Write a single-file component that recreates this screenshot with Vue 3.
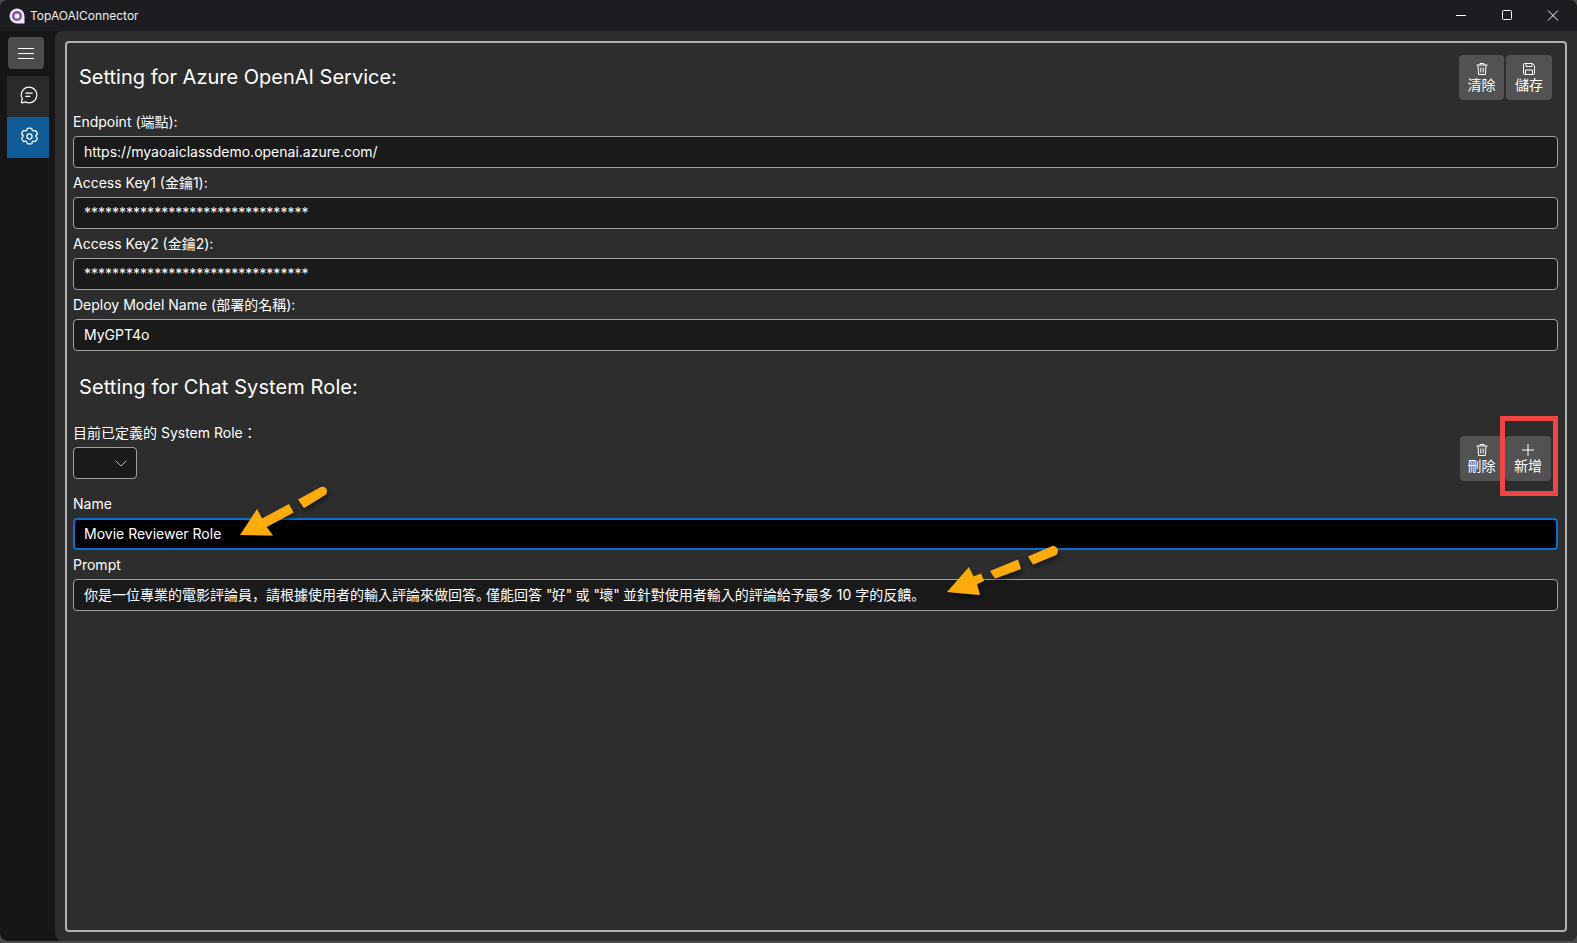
<script setup>
const serviceFields = [
  { label: 'Endpoint (端點):', value: 'https://myaoaiclassdemo.openai.azure.com/' },
  { label: 'Access Key1 (金鑰1):', value: '********************************' },
  { label: 'Access Key2 (金鑰2):', value: '********************************' },
  { label: 'Deploy Model Name (部署的名稱):', value: 'MyGPT4o' },
]
</script>

<template>
  <div class="window">
    <header class="titlebar">
      <svg class="logo" width="16" height="16" viewBox="0 0 16 16">
        <path d="M8 .5a7.500 7.500 0 1 0 0 15h7.500V8A7.500 7.500 0 0 0 8 .5z" fill="#efe6f5" />
        <circle cx="8" cy="8" r="5" fill="#7a4fa8" />
        <circle cx="8" cy="8" r="2.600" fill="#f4eef8" />
      </svg>
      <span class="app-name">TopAOAIConnector</span>
      <div class="win-controls">
        <svg width="46" height="31" viewBox="0 0 46 31"><path d="M18 15.500h10" stroke="#fff" fill="none" /></svg>
        <svg width="46" height="31" viewBox="0 0 46 31"><rect x="18.500" y="10.500" width="9" height="9" rx="1" stroke="#fff" fill="none" /></svg>
        <svg width="46" height="31" viewBox="0 0 46 31"><path d="M18 10.500l10 10m0-10l-10 10" stroke="#fff" fill="none" /></svg>
      </div>
    </header>

    <div class="body">
      <nav class="sidebar">
        <div class="hamburger">
          <svg width="16" height="11" viewBox="0 0 16 11"><path d="M0 .5h16M0 5.500h16M0 10.500h16" stroke="#fff" fill="none" /></svg>
        </div>
        <div class="nav-item">
          <svg width="18" height="18" viewBox="0 0 18 18" fill="none" stroke="#fff" stroke-width="1.200">
            <path d="M9 1.200a7.800 7.800 0 1 1-3.600 14.700l-3.200.9a.6.6 0 0 1-.8-.8l.9-3.200A7.800 7.800 0 0 1 9 1.200z" />
            <path d="M5.800 7.200h6.400M5.800 10.400h4" stroke-linecap="round" />
          </svg>
        </div>
        <div class="nav-item active">
          <svg width="19" height="19" viewBox="0 0 24 24" fill="none" stroke="#fff" stroke-width="1.600" stroke-linejoin="round">
            <circle cx="12" cy="12" r="3.200" />
            <path d="M12 2c1 0 1.900.1 2.800.4l.6 2.300c.2.800 1 1.300 1.800 1.100l2.300-.6c1.200 1.300 2.100 2.900 2.500 4.700l-1.700 1.600c-.6.600-.6 1.500 0 2.100l1.700 1.600c-.4 1.800-1.300 3.400-2.500 4.700l-2.300-.6c-.8-.2-1.600.3-1.800 1.100l-.6 2.300" transform="translate(0 -.6) scale(1 .96)" />
            <path d="M12 2c-1 0-1.900.1-2.800.4l-.6 2.300c-.2.800-1 1.300-1.800 1.100l-2.300-.6c-1.200 1.300-2.100 2.900-2.500 4.700l1.700 1.600c.6.600.6 1.500 0 2.100l-1.700 1.600c.4 1.800 1.300 3.400 2.500 4.700l2.300-.6c.8-.2 1.600.3 1.800 1.100l.6 2.300c.9.300 5.700.3 5.600 0" transform="translate(0 -.6) scale(1 .96)" />
          </svg>
        </div>
      </nav>

      <main class="content">
        <section class="panel">
          <div class="section-head">
            <h2 class="section-title first">Setting for Azure OpenAI Service:</h2>
            <div class="actions">
              <button class="action">
                <svg width="14" height="14" viewBox="0 0 14 14" fill="none" stroke="#fff"><path d="M1.500 3h11M5 3V1.500h4V3M3 3l.6 9.500h6.800L11 3M5.800 5.500v5M8.200 5.500v5" /></svg>
                <span>清除</span>
              </button>
              <button class="action">
                <svg width="14" height="14" viewBox="0 0 14 14" fill="none" stroke="#fff"><path d="M1.500 2.500a1 1 0 0 1 1-1h8l2 2v8a1 1 0 0 1-1 1h-9a1 1 0 0 1-1-1z" /><path d="M4 1.500v3h6v-3M3.500 12.500V8h7v4.500" /></svg>
                <span>儲存</span>
              </button>
            </div>
          </div>

          <div v-for="f in serviceFields" :key="f.label" class="field">
            <label class="field-label">{{ f.label }}</label>
            <div class="input">{{ f.value }}</div>
          </div>

          <h2 class="section-title second">Setting for Chat System Role:</h2>

          <div class="role-row">
            <div class="role-select">
              <label class="select-label">目前已定義的 System Role：</label>
              <div class="select">
                <svg width="12" height="7" viewBox="0 0 12 7" fill="none" stroke="#bbb"><path d="M.5.5L6 6l5.500-5.500" /></svg>
              </div>
            </div>
            <div class="actions role-actions">
              <button class="action">
                <svg width="14" height="14" viewBox="0 0 14 14" fill="none" stroke="#fff"><path d="M1.500 3h11M5 3V1.500h4V3M3 3l.6 9.500h6.800L11 3M5.800 5.500v5M8.200 5.500v5" /></svg>
                <span>刪除</span>
              </button>
              <button class="action">
                <svg width="14" height="14" viewBox="0 0 14 14" fill="none" stroke="#fff"><path d="M7 1v12M1 7h12" /></svg>
                <span>新增</span>
              </button>
            </div>
          </div>

          <div class="field name-field">
            <label class="field-label">Name</label>
            <div class="input focused">Movie Reviewer Role</div>
          </div>
          <div class="field">
            <label class="field-label">Prompt</label>
            <div class="input prompt-input">你是一位專業的電影評論員<span class="mark">，</span>請根據使用者的輸入評論來做回答<span class="mark narrow">。</span>僅能回答 <span class="quoted">"</span>好<span class="quoted">"</span> 或 <span class="quoted">"</span>壞<span class="quoted">"</span> 並針對使用者輸入的評論給予最多 10 字的反饋<span class="mark narrow">。</span></div>
          </div>
        </section>
      </main>
    </div>

    <svg class="annotations" width="1577" height="943" viewBox="0 0 1577 943">
      <defs>
        <filter id="soft" x="-20%" y="-20%" width="140%" height="150%">
          <feDropShadow dx="1" dy="3" stdDeviation="2.500" flood-color="#000" flood-opacity=".55" />
        </filter>
      </defs>
      <rect x="1502.500" y="418.500" width="53" height="75" fill="none" stroke="#f04545" stroke-width="5" />
      <g filter="url(#soft)" fill="#fcab0a" stroke="none">
        <path d="M240 535L257 509L262 518.500L289 504L293.500 512.500L266.500 527L273 535.500z" />
        <path d="M298 499.500L320 487.500A4.500 4.500 0 0 1 325 495L304 508z" />
        <path d="M947 592L969 567L973.500 576.500L981 573.500L984 581L977 584L980 595z" />
        <path d="M990 571L1018 559.500L1021 569L995 578.500z" />
        <path d="M1028 556.500L1050 547A4.500 4.500 0 0 1 1056 555L1033 564.500z" />
      </g>
    </svg>
  </div>
</template>

<style>
html, body { margin: 0; background: #4a4a4a; }
</style>

<style scoped>
.window {
  position: relative;
  width: 1577px;
  height: 941px;
  overflow: hidden;
  display: flex;
  flex-direction: column;
  background: #161616;
  border-radius: 8px;
  font-family: Inter, "Noto Sans CJK TC", sans-serif;
  color: #fff;
  font-size: 14px;
}
.titlebar {
  height: 31px;
  flex: none;
  display: flex;
  align-items: center;
  background: #1c1d21;
  padding-left: 9px;
  box-sizing: border-box;
}
.logo { flex: none; }
.app-name { margin-left: 5px; font-size: 12px; color: #eee; }
.win-controls { margin-left: auto; margin-right: 1px; display: flex; }
.body { flex: 1; display: flex; min-height: 0; }
.sidebar {
  width: 55px;
  flex: none;
  padding: 6px 0 0 7px;
  box-sizing: border-box;
  display: flex;
  flex-direction: column;
}
.hamburger {
  width: 36px;
  height: 32px;
  margin: 0 0 7px 1px;
  display: flex;
  align-items: center;
  justify-content: center;
  background: #4c4c4c;
  border-radius: 4px;
}
.nav-item {
  width: 42px;
  height: 41px;
  box-sizing: border-box;
  padding: 0 0 3px 2px;
  display: flex;
  align-items: center;
  justify-content: center;
  background: #2a2a2a;
}
.nav-item.active { background: #0f5c99; }
.content {
  flex: 1;
  min-width: 0;
  background: #2d2d2d;
  border-top-left-radius: 8px;
  border-bottom-left-radius: 8px;
  padding: 10px 10px 9px 10px;
  box-sizing: border-box;
  display: flex;
}
.panel {
  flex: 1;
  min-width: 0;
  border: 2px solid #b0b0b0;
  border-radius: 4px;
  padding: 0 7px 0 6px;
  box-sizing: border-box;
}
.section-head {
  height: 64px;
  display: flex;
  align-items: center;
  justify-content: space-between;
}
.section-title {
  margin: 0 0 0 6px;
  font-size: 20px;
  font-weight: 400;
  line-height: 28px;
}
.section-title.first { margin-top: 4px; }
.section-title.second { margin-top: 22px; margin-bottom: 18px; letter-spacing: .1px; }
.actions { display: flex; gap: 2px; margin-right: 6px; padding-top: 4px; }
.action {
  width: 45px;
  height: 45px;
  padding: 0;
  border: none;
  border-radius: 4px;
  background: #525252;
  color: #fff;
  font: inherit;
  line-height: 17px;
  display: flex;
  flex-direction: column;
  align-items: center;
  justify-content: center;
}
.action:last-child { width: 46px; }
.field-label {
  display: block;
  height: 29px;
  line-height: 29px;
}
.input {
  height: 32px;
  box-sizing: border-box;
  border: 1px solid #a0a0a0;
  border-radius: 4px;
  background: #1a1a1a;
  padding: 0 10px;
  line-height: 30px;
  white-space: nowrap;
}
.input.focused {
  border: 2px solid #0a6fce;
  background: #000;
  padding: 0 9px;
  line-height: 28px;
}
.input.prompt-input { line-height: 28px; }
.mark { font-family: "Noto Sans CJK SC", sans-serif; }
.mark.narrow { font-feature-settings: "halt"; letter-spacing: 3px; }
.quoted { letter-spacing: -.75px; }
.role-row { display: flex; justify-content: space-between; align-items: flex-start; }
.select-label { display: block; height: 28px; line-height: 28px; }
.select {
  width: 64px;
  height: 32px;
  box-sizing: border-box;
  border: 1px solid #a0a0a0;
  border-radius: 4px;
  background: #1a1a1a;
  display: flex;
  align-items: center;
  justify-content: flex-end;
  padding-right: 9px;
}
.role-actions { padding-top: 17px; margin-right: 7px; }
.role-actions .action:first-child { width: 43px; }
.name-field { margin-top: 8px; }
.annotations { position: absolute; left: 0; top: 0; pointer-events: none; }
</style>
